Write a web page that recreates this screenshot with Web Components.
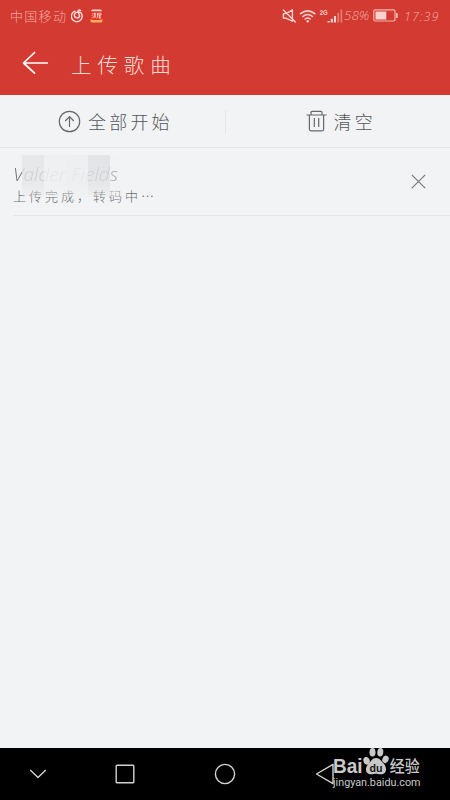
<!DOCTYPE html>
<html lang="zh-CN">
<head>
<meta charset="utf-8">
<title>上传歌曲</title>
<style>
  html, body {
    margin: 0;
    height: 100%;
  }

  body {
    --red: #d33a31;
    --line: #e4e6e8;
    --ink: #55575a;
    font-family: "Noto Sans CJK SC", "Liberation Sans", sans-serif;
    font-weight: 300;
    overflow: hidden;
  }
</style>
</head>
<body>
<upload-screen></upload-screen>

<script>
class StatusBar extends HTMLElement {
  constructor() {
    super();
    this.attachShadow({ mode: 'open' });
  }

  connectedCallback() {
    this.shadowRoot.innerHTML = `
      <style>
        :host {
          display: flex;
          align-items: center;
          height: 31px;
          padding: 0 10px;
          color: #f2aaa4;
          font-family: "Noto Sans CJK SC", sans-serif;
          font-size: 13px;
          line-height: 31px;
        }
        svg { display: block; flex: none; }
        .carrier { width: 61px; letter-spacing: 1.3px; white-space: nowrap; }
        .app { margin-left: 6px; }
        .signal { margin-left: auto; }
        .num { font-family: "Open Sans", sans-serif; font-style: italic; }
        .percent { width: 25px; margin: 0 4px 0 1px; font-size: 13.5px; }
        .time { width: 36px; margin-left: 6px; font-size: 12.5px; letter-spacing: 1px; padding-top: 2px; }
      </style>
      <span class="carrier">${this.getAttribute('carrier')}</span>
      <svg width="13" height="14" viewBox="0 0 13 14" fill="none" stroke="#fbdcd8" stroke-width="1.4" stroke-linecap="round">
        <path d="M4 2.2A5.4 5.4 0 1 0 9.4 3.3Q8 2.7 6.6 3.3A2.8 2.8 0 1 0 8.6 7.4Q8.4 6 7.3 3.2Q6.8 1 8.2 .9Q9.2 .9 9.7 1.6"/>
      </svg>
      <svg class="app" width="13" height="14" viewBox="0 0 13 14">
        <path d="M1 2.5Q1 .5 3 .5H10Q12 .5 12 2.5Z" fill="#f8d8cc"/>
        <rect y="2.5" width="13" height="8" fill="#e62c1d"/>
        <path d="M.5 10.2Q6.5 12 12.5 10.2V12Q12.5 13.5 10.5 13.5H2.5Q.5 13.5 .5 12Z" fill="#f4ad5b"/>
        <path d="M2 4.5l1 .5M1.7 6.2l1 .5M1.8 9l1-1.3M3.5 4.5h2.7M4.8 3.7v4M3.5 6h2.7M3.3 7.8h3M4 8.6l-.5.8M5.5 8.6l.7.8M7.5 4.2h3.7v1.5H7.5zv4l-.7 1M8.3 7h3M9.7 6v3.3M8.3 9h3" fill="none" stroke="#fff" stroke-width=".65"/>
      </svg>
      <svg class="signal" width="61" height="16" viewBox="0 0 61 16" fill="none" stroke="#f9d1cd" stroke-linecap="round">
        <path d="M1.4 5.6H4.4L10.4 1.8V13.2L4.4 10.3H1.4ZM1.4 2L13.4 14" stroke-width="1.4" stroke-linejoin="round"/>
        <path d="M18.6 5.7Q25.7-.1 32.8 5.7M20.9 8.5Q25.7 4.5 30.5 8.5M23.2 11Q25.7 9 28.2 11" stroke-width="1.6"/>
        <circle cx="25.7" cy="13.3" r="1.2" fill="#f9d1cd" stroke="none"/>
        <path d="M46.6 13V14.5M49.8 10.8V14.5M53 8V14.5" stroke-width="2.1" stroke-linecap="butt"/>
        <path d="M56.3 5V14.5M59.4 1.5V14.5" stroke="#e47d76" stroke-width="1.7" stroke-linecap="butt"/>
        <text x="37.7" y="7.2" font-family="Liberation Sans" font-size="8" font-weight="700" fill="#f9d1cd" stroke="none" textLength="8" lengthAdjust="spacingAndGlyphs">2G</text>
      </svg>
      <span class="num percent">58%</span>
      <svg width="25" height="13" viewBox="0 0 25 13">
        <rect x=".8" y=".8" width="21.2" height="11.2" rx="1.4" fill="none" stroke="#f3b5b0" stroke-width="1.2"/>
        <path d="M2.5 2.5h10.8v8H2.5z" fill="#fad3cf"/>
        <path d="M23.2 4h1.4v5h-1.4z" fill="#fad3cf"/>
      </svg>
      <span class="num time">17:39</span>
    `;
  }
}

class AppHeader extends HTMLElement {
  constructor() {
    super();
    this.attachShadow({ mode: 'open' });
  }

  connectedCallback() {
    this.shadowRoot.innerHTML = `
      <style>
        :host {
          display: flex;
          align-items: center;
          height: 64px;
          padding-left: 22px;
          color: #fbdcd5;
        }
        svg { display: block; }
        h1 {
          margin: 1px 0 0 22px;
          font-size: 20.5px;
          font-weight: 300;
          letter-spacing: 5.9px;
          line-height: 64px;
        }
      </style>
      <svg width="27" height="24" viewBox="0 0 27 24" fill="none" stroke="#fff" stroke-width="1.7" stroke-linecap="round" stroke-linejoin="round">
        <path d="M12.6 1.5L1.5 12L12.6 22.2M1.5 12H25.3"/>
      </svg>
      <h1><slot></slot></h1>
    `;
  }
}

class ToolButton extends HTMLElement {
  constructor() {
    super();
    this.attachShadow({ mode: 'open' });
  }

  connectedCallback() {
    this.shadowRoot.innerHTML = `
      <style>
        :host {
          display: flex;
          align-items: center;
          color: var(--ink);
          font-size: 18px;
          letter-spacing: 3.2px;
          line-height: 48px;
          white-space: nowrap;
        }
        .label { margin-left: 7px; }
        ::slotted(svg) { display: block; flex: none; }
      </style>
      <slot name="icon"></slot>
      <span class="label"><slot></slot></span>
    `;
  }
}

class UploadItem extends HTMLElement {
  constructor() {
    super();
    this.attachShadow({ mode: 'open' });
  }

  connectedCallback() {
    this.shadowRoot.innerHTML = `
      <style>
        :host {
          display: flex;
          align-items: center;
          justify-content: space-between;
          height: 67px;
          margin-left: 13px;
          padding-right: 24px;
          border-bottom: 1px solid var(--line);
        }
        .text { padding-top: 4px; }
        .name {
          position: relative;
          width: 120px;
          color: #6c6e71;
          font-family: "Open Sans", sans-serif;
          font-size: 18px;
          font-style: italic;
          line-height: 24px;
          white-space: nowrap;
        }
        .name span { display: inline-block; transform: scaleX(1.07); transform-origin: left; }
        .status {
          color: #6c6e71;
          font-size: 13px;
          letter-spacing: 3px;
          line-height: 20px;
          white-space: nowrap;
        }
        /* mosaic over the song name */
        .mosaic {
          position: absolute;
          left: 9px;
          top: -7px;
          width: 88px;
          height: 42px;
          background: linear-gradient(90deg, #e4e5e6d0 22px, #eeeff0ee 22px 44px, #edeeeff0 44px 66px, #e1e2e4d8 66px 88px);
          -webkit-mask: linear-gradient(#000 60%, #0004);
          mask: linear-gradient(#000 60%, #0004);
        }
        .fade {
          position: absolute;
          left: 97px;
          top: -7px;
          width: 22px;
          height: 42px;
          background: linear-gradient(90deg, #f0f1f290, #f2f3f500);
        }
        svg { display: block; }
      </style>
      <div class="text">
        <div class="name"><span><slot></slot></span><i class="mosaic"></i><i class="fade"></i></div>
        <div class="status"><slot name="status"></slot></div>
      </div>
      <svg width="15" height="15" viewBox="0 0 15 15" stroke="#77797b" stroke-width="1.2">
        <path d="M.8.8L14.2 14.2M14.2.8L.8 14.2"/>
      </svg>
    `;
  }
}

class NavBar extends HTMLElement {
  constructor() {
    super();
    this.attachShadow({ mode: 'open' });
  }

  connectedCallback() {
    this.shadowRoot.innerHTML = `
      <style>
        :host {
          display: grid;
          grid-template-columns: 75px 100px 100px 100px;
          align-items: center;
          justify-items: center;
          height: 52px;
          background: #000;
        }
        svg { display: block; fill: none; stroke: #d2d2d2; stroke-width: 1.4; }
      </style>
      <svg width="18" height="12" viewBox="0 0 18 12"><path d="M1.2 2L9 9.5L16.8 2"/></svg>
      <svg width="20" height="20" viewBox="0 0 20 20"><rect x="1.2" y="1.2" width="17.6" height="17.6" rx=".8"/></svg>
      <svg width="22" height="22" viewBox="0 0 22 22"><circle cx="11" cy="11" r="9.6"/></svg>
      <svg width="20" height="22" viewBox="0 0 20 22"><path d="M18 1.3V20.7L1.5 11Z" stroke-linejoin="round"/></svg>
    `;
  }
}

class SiteMark extends HTMLElement {
  constructor() {
    super();
    this.attachShadow({ mode: 'open' });
  }

  connectedCallback() {
    this.shadowRoot.innerHTML = `
      <style>
        :host { display: block; width: 118px; height: 43px; }
        svg { display: block; }
      </style>
      <svg width="118" height="43" viewBox="0 0 118 43" fill="#c9c9c9">
        <text x="1" y="27" font-family="Liberation Sans" font-size="20" font-weight="700" textLength="29.5" lengthAdjust="spacingAndGlyphs">Bai</text>
        <ellipse cx="34.6" cy="14.8" rx="3.1" ry="3.9" transform="rotate(-18 34.6 14.8)"/>
        <ellipse cx="40.5" cy="6.2" rx="3" ry="4.3"/>
        <ellipse cx="48.3" cy="6.2" rx="3" ry="4.3" transform="rotate(8 48.3 6.2)"/>
        <ellipse cx="53.5" cy="13.4" rx="3.1" ry="3.9" transform="rotate(18 53.5 13.4)"/>
        <path d="M44 12C48 12 49.4 15.4 51.6 17.6C55 21 55 27.3 50.3 28.2C47.5 28.6 46 27.7 44 27.7S40.5 28.6 37.7 28.2C33 27.4 33 21.2 36.4 18C39.2 15.4 40 12 44 12Z"/>
        <text x="37.6" y="26" font-family="Liberation Sans" font-size="11" font-weight="700" fill="#151515" textLength="13" lengthAdjust="spacingAndGlyphs">du</text>
        <text x="57.7" y="26" font-family="Noto Sans CJK SC" font-size="15.5" font-weight="500" textLength="30" lengthAdjust="spacingAndGlyphs">经验</text>
        <text x="1" y="39.5" font-family="Roboto" font-size="10.6" font-weight="400" textLength="87.5" lengthAdjust="spacingAndGlyphs">jingyan.baidu.com</text>
      </svg>
    `;
  }
}

class UploadScreen extends HTMLElement {
  constructor() {
    super();
    this.attachShadow({ mode: 'open' });
  }

  connectedCallback() {
    this.shadowRoot.innerHTML = `
      <style>
        :host {
          display: flex;
          flex-direction: column;
          position: relative;
          height: 800px;
          width: 450px;
          background: #f2f3f5;
        }
        .top { background: var(--red); }
        .tools {
          display: grid;
          grid-template-columns: 1fr 1px 1fr;
          align-items: center;
          height: 52px;
          border-bottom: 1px solid var(--line);
        }
        .divider { height: 23px; background: var(--line); }
        .all { padding-left: 58px; }
        .clear { padding-left: 80px; }
        main { flex: 1; }
        /* sits over the navigation bar */
        site-mark { position: absolute; left: 332px; top: 746px; }
      </style>
      <div class="top">
        <status-bar carrier="中国移动"></status-bar>
        <app-header>上传歌曲</app-header>
      </div>
      <div class="tools">
        <tool-button class="all">
          <svg slot="icon" width="23" height="23" viewBox="0 0 23 23" fill="none" stroke="#66686b" stroke-width="1.2">
            <circle cx="11.5" cy="11.5" r="10.2"/>
            <path d="M11.5 17V6.8M7.2 11L11.5 6.7L15.8 11"/>
          </svg>全部开始</tool-button>
        <i class="divider"></i>
        <tool-button class="clear">
          <svg slot="icon" width="21" height="22" viewBox="0 0 21 22" fill="none" stroke="#66686b" stroke-width="1.2">
            <path d="M.5 5H20.5M5 5V2.6Q5 1.4 6.2 1.4H14.8Q16 1.4 16 2.6V5M3.4 5V19Q3.4 20.8 5 20.8H16Q17.6 20.8 17.6 19V5M8.3 8V17M12.7 8V17"/>
          </svg>清空</tool-button>
      </div>
      <main>
        <upload-item>Valder Fields<span slot="status">上传完成，转码中…</span></upload-item>
      </main>
      <nav-bar></nav-bar>
      <site-mark></site-mark>
    `;
  }
}

customElements.define('status-bar', StatusBar);
customElements.define('app-header', AppHeader);
customElements.define('tool-button', ToolButton);
customElements.define('upload-item', UploadItem);
customElements.define('nav-bar', NavBar);
customElements.define('site-mark', SiteMark);
customElements.define('upload-screen', UploadScreen);
</script>
</body>
</html>
